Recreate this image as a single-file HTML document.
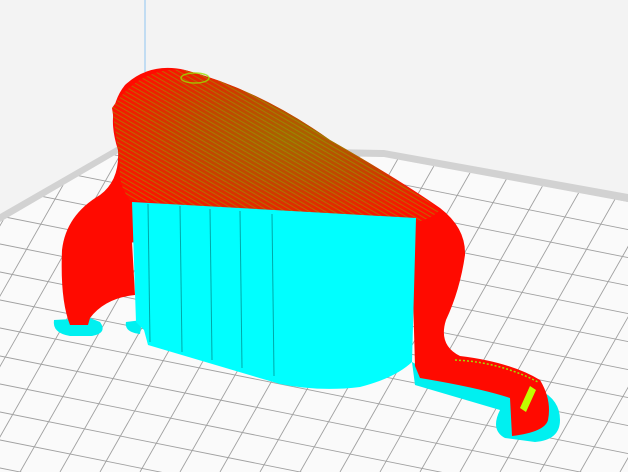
<!DOCTYPE html>
<html><head><style>html,body{margin:0;padding:0;width:628px;height:472px;overflow:hidden;background:#f3f3f3}svg{display:block}</style></head>
<body>
<svg width="628" height="472" viewBox="0 0 628 472" xmlns="http://www.w3.org/2000/svg">
<defs>
<clipPath id="floor"><polygon points="0,222 120,152 384,157 628,202 628,472 0,472"/></clipPath>
<radialGradient id="top" cx="0.55" cy="0.45" r="0.6">
<stop offset="0" stop-color="#a86400"/>
<stop offset="0.5" stop-color="#c44400"/>
<stop offset="1" stop-color="#ff1000"/>
</radialGradient>
<pattern id="str" width="4" height="4" patternUnits="userSpaceOnUse" patternTransform="rotate(30)">
<rect width="4" height="1" fill="#7fbf00" opacity="0.45"/>
</pattern>
</defs>
<rect width="628" height="472" fill="#f3f3f3"/>
<polygon points="0,222 120,152 384,157 628,202 628,472 0,472" fill="#fafafa"/>
<g clip-path="url(#floor)" stroke="#8a8a8a" stroke-width="0.9" opacity="0.8">
<line x1="-50" y1="150" x2="700" y2="300"/>
<line x1="-50" y1="178" x2="700" y2="328"/>
<line x1="-50" y1="206" x2="700" y2="356"/>
<line x1="-50" y1="234" x2="700" y2="384"/>
<line x1="-50" y1="262" x2="700" y2="412"/>
<line x1="-50" y1="290" x2="700" y2="440"/>
<line x1="-50" y1="318" x2="700" y2="468"/>
<line x1="-50" y1="346" x2="700" y2="496"/>
<line x1="-50" y1="374" x2="700" y2="524"/>
<line x1="-50" y1="402" x2="700" y2="552"/>
<line x1="-50" y1="430" x2="700" y2="580"/>
<line x1="-50" y1="458" x2="700" y2="608"/>
<line x1="-50" y1="486" x2="700" y2="636"/>
<line x1="-50" y1="122" x2="700" y2="272"/>
<line x1="-50" y1="94" x2="700" y2="244"/>
<line x1="-50" y1="66" x2="700" y2="216"/>
<line x1="-50" y1="38" x2="700" y2="188"/>
<line x1="-140" y1="472" x2="60" y2="120"/>
<line x1="-100" y1="472" x2="100" y2="120"/>
<line x1="-60" y1="472" x2="140" y2="120"/>
<line x1="-20" y1="472" x2="180" y2="120"/>
<line x1="20" y1="472" x2="220" y2="120"/>
<line x1="60" y1="472" x2="260" y2="120"/>
<line x1="100" y1="472" x2="300" y2="120"/>
<line x1="140" y1="472" x2="340" y2="120"/>
<line x1="180" y1="472" x2="380" y2="120"/>
<line x1="220" y1="472" x2="420" y2="120"/>
<line x1="260" y1="472" x2="460" y2="120"/>
<line x1="300" y1="472" x2="500" y2="120"/>
<line x1="340" y1="472" x2="540" y2="120"/>
<line x1="380" y1="472" x2="580" y2="120"/>
<line x1="420" y1="472" x2="620" y2="120"/>
<line x1="460" y1="472" x2="660" y2="120"/>
<line x1="500" y1="472" x2="700" y2="120"/>
<line x1="540" y1="472" x2="740" y2="120"/>
<line x1="580" y1="472" x2="780" y2="120"/>
<line x1="620" y1="472" x2="820" y2="120"/>
</g>
<polygon points="0,214 120,145 120,152 0,222" fill="#d2d2d2"/>
<polygon points="120,145 384,150 628,194 628,202 384,157 120,152" fill="#d2d2d2"/>
<line x1="145" y1="0" x2="145" y2="72" stroke="#8fc4f0" stroke-width="1"/>
<path d="M54,320 Q52,333 70,336 L92,336 Q108,333 100,322 L90,318 Z" fill="#00f0f0"/>
<path d="M126,322 Q124,332 140,334 L142,320 Z" fill="#00f0f0"/>
<path d="M412,362 L430,372 L510,392 L540,390 Q560,400 560,420 Q560,440 535,442 L505,438 Q490,430 500,410 L415,385 Z" fill="#00f0f0"/>
<path d="M70,325 Q60,300 62,250 Q66,215 100,195 Q120,180 118,150 Q105,110 125,85 Q150,62 185,70 Q260,90 330,140 Q400,180 440,208 Q466,228 465,255 Q460,290 446,320 Q438,345 460,356 Q510,362 540,380 Q552,400 548,420 Q545,432 512,436 L510,398 Q480,388 420,378 L415,366 L412,260 L132,242 L135,295 Q105,298 90,318 L88,325 Z" fill="#ff0a00"/>
<path d="M112,108 Q140,66 185,70 Q260,90 330,140 Q400,180 440,210 Q430,220 415,222 Q300,210 230,215 Q180,205 130,200 Q118,185 120,165 Q116,135 112,108 Z" fill="url(#top)"/>
<path d="M112,108 Q140,66 185,70 Q260,90 330,140 Q400,180 440,210 Q430,220 415,222 Q300,210 230,215 Q180,205 130,200 Q118,185 120,165 Q116,135 112,108 Z" fill="url(#str)"/>
<ellipse cx="195" cy="78" rx="14" ry="5" fill="none" stroke="#9ae000" stroke-width="1.5" opacity="0.8"/>
<path d="M455,360 Q500,362 538,382" fill="none" stroke="#a0e000" stroke-width="1.5" stroke-dasharray="2 2"/>
<path d="M520,408 L530,386 L536,390 L526,412 Z" fill="#c0ff00"/>
<path d="M132,202 L416,218 L412,362 Q395,378 360,387 Q320,392 280,384 L148,345 L144,330 L136,322 Z" fill="#00ffff"/>
<g stroke="#00a8a8" stroke-width="1">
<line x1="148" y1="204" x2="150" y2="342"/>
<line x1="180" y1="206" x2="182" y2="352"/>
<line x1="210" y1="209" x2="212" y2="360"/>
<line x1="240" y1="211" x2="242" y2="368"/>
<line x1="272" y1="214" x2="274" y2="376"/>
</g>
</svg>
</body></html>
